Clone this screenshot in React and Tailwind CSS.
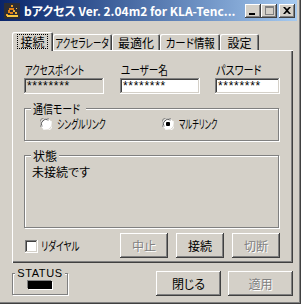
import React from 'react';

const jp = "font-['Noto_Sans_CJK_JP',sans-serif] [font-feature-settings:'palt']";
const raised =
  'bg-[#d4d0c8] shadow-[inset_-1px_-1px_#404040,inset_1px_1px_#ffffff,inset_-2px_-2px_#808080,inset_2px_2px_#d4d0c8]';
const sunken =
  'shadow-[inset_-1px_-1px_#ffffff,inset_1px_1px_#808080,inset_-2px_-2px_#d4d0c8,inset_2px_2px_#404040]';
const etched = 'border border-[#808080] shadow-[1px_1px_#ffffff,inset_1px_1px_#ffffff]';
const disabledText = 'text-[#808080] [text-shadow:1px_1px_#ffffff]';

// MS UI Gothic has narrow kana; squeeze the Noto glyphs to the same run width
function Narrow({ children, className = '' }) {
  return <span className={`inline-block whitespace-nowrap ${className}`}>{children}</span>;
}

function AppIcon() {
  return (
    <svg width="16" height="16" viewBox="0 0 16 16" className="shrink-0">
      <rect x="0" y="0" width="16" height="16" fill="#2e2e34" />
      <rect x="7" y="2" width="2" height="2" fill="#f0a020" />
      <rect x="5" y="5" width="5" height="2" fill="#e08018" />
      <rect x="4" y="7" width="2" height="3" fill="#e08018" />
      <rect x="9" y="7" width="2" height="2" fill="#f0b030" />
      <rect x="6" y="9" width="3" height="2" fill="#e08018" />
      <rect x="11" y="9" width="2" height="2" fill="#f0b030" />
      <rect x="2" y="11" width="2" height="2" fill="#f0a020" />
      <rect x="3" y="12" width="11" height="2" fill="#f8c840" />
      <rect x="12" y="5" width="1" height="1" fill="#f8c840" />
    </svg>
  );
}

function CaptionButton({ children, className = '' }) {
  return (
    <div className={`${raised} w-[16px] h-[14px] flex items-center justify-center ${className}`}>
      {children}
    </div>
  );
}

function TitleBar() {
  return (
    <div className="h-[21px] w-[297px] flex items-center bg-linear-to-r from-[#0a246a] to-[#a6caf0]">
      <div className="ml-[4px]">
        <AppIcon />
      </div>
      <div className={`ml-[4px] text-white font-bold text-[12px] leading-[14px] whitespace-nowrap ${jp}`}>
        bアクセス Ver. 2.04m2 for KLA-Tenc...
      </div>
      <div className="ml-auto mr-[2px] flex items-center">
        <CaptionButton>
          <svg width="8" height="8" viewBox="0 0 8 8">
            <rect x="0" y="6" width="6" height="2" fill="#000" />
          </svg>
        </CaptionButton>
        <CaptionButton>
          <svg width="9" height="9" viewBox="0 0 9 9">
            <rect x="0.5" y="0.5" width="8" height="8" fill="none" stroke="#808080" />
            <rect x="0" y="1" width="9" height="1" fill="#808080" />
          </svg>
        </CaptionButton>
        <CaptionButton className="ml-[2px]">
          <svg width="8" height="7" viewBox="0 0 8 7">
            <path d="M0 0h2l2 2 2-2h2L5 3.5 8 7H6L4 5 2 7H0l3-3.5z" fill="#000" />
          </svg>
        </CaptionButton>
      </div>
    </div>
  );
}

const tabBevel =
  'bg-[#d4d0c8] rounded-tl-[2px] rounded-tr-[2px] shadow-[inset_1px_1px_#ffffff,inset_-1px_0_#404040,inset_-2px_0_#808080]';

function Tabs() {
  return (
    <div className={`flex items-end h-[18px] ${jp}`}>
      <div className={`w-[41px] h-[19px] -mb-px relative z-10 ${tabBevel} flex items-start justify-center pt-[3px]`}>
        <span className="outline-1 outline-dotted outline-black px-[2px] leading-[13px]">接続</span>
      </div>
      <div className={`w-[59px] h-[16px] ${tabBevel} flex items-start justify-center pt-[2px] leading-[13px]`}>
        <Narrow className="scale-x-[0.7]">アクセラレータ</Narrow>
      </div>
      <div className={`w-[48px] h-[16px] ${tabBevel} flex items-start justify-center pt-[2px] leading-[13px]`}>
        最適化
      </div>
      <div className={`w-[60px] h-[16px] ${tabBevel} flex items-start justify-center pt-[2px] leading-[13px]`}>
        <Narrow className="scale-x-[0.87]">カード情報</Narrow>
      </div>
      <div className={`w-[39px] h-[16px] ${tabBevel} flex items-start justify-center pt-[2px] leading-[13px]`}>
        設定
      </div>
    </div>
  );
}

function Field({ w, label, readOnly }) {
  return (
    <div className={`flex flex-col ${w}`}>
      <div className={`h-[14px] leading-[12px] pl-px whitespace-nowrap ${jp}`}>{label}</div>
      <div
        className={`${w} h-[16px] ${sunken} ${readOnly ? 'bg-[#d4d0c8]' : 'bg-white'} pl-[3px] flex items-center text-[12px] leading-[12px] tracking-[0.7px] font-['Liberation_Sans',sans-serif]`}
      >
        ********
      </div>
    </div>
  );
}

function Radio({ checked, children }) {
  return (
    <div className="flex items-center">
      <svg width="12" height="12" viewBox="0 0 12 12" className="shrink-0">
        <circle cx="6" cy="6" r="5.5" fill="#ffffff" />
        <path d="M1.2 9A5.5 5.5 0 0 1 9 1.2" stroke="#808080" strokeWidth="1" fill="none" />
        <path d="M2.3 8.3A4.3 4.3 0 0 1 8.3 2.3" stroke="#404040" strokeWidth="1" fill="none" />
        <path d="M10.8 3A5.5 5.5 0 0 1 3 10.8" stroke="#ffffff" strokeWidth="1" fill="none" />
        <circle cx="6" cy="6" r="3.8" fill="#ffffff" />
        {checked && <rect x="4" y="4" width="4" height="4" rx="1" fill="#000" />}
      </svg>
      <span className={`ml-[5px] leading-[12px] ${jp}`}>{children}</span>
    </div>
  );
}

function Button({ children, w, disabled, className = '' }) {
  return (
    <div
      className={`${raised} ${w} h-[25px] flex items-center justify-center ${jp} ${disabled ? disabledText : 'text-black'} ${className}`}
    >
      {children}
    </div>
  );
}

function Panel() {
  return (
    <div className="w-[281px] h-[213px] shadow-[inset_1px_1px_#ffffff,inset_-1px_-1px_#404040,inset_-2px_-2px_#808080] pl-[12px] pr-[13px] pt-[14px] flex flex-col">
      <div className="flex">
        <Field
          w="w-[80px]"
          readOnly
          label={<Narrow className="origin-left scale-x-[0.69]">アクセスポイント</Narrow>}
        />
        <div className="ml-[16px]">
          <Field w="w-[80px]" label={<Narrow className="origin-left scale-x-[0.8]">ユーザー名</Narrow>} />
        </div>
        <div className="ml-[15px]">
          <Field w="w-[65px]" label={<Narrow className="origin-left scale-x-[0.84]">パスワード</Narrow>} />
        </div>
      </div>

      <div className={`mt-[14px] h-[33px] w-[255px] ${etched} flex flex-col`}>
        <div className={`-mt-[7px] ml-[6px] self-start px-[2px] bg-[#d4d0c8] leading-[13px] w-[55px] ${jp}`}>
          <Narrow className="origin-left scale-x-[0.83]">通信モード</Narrow>
        </div>
        <div className="flex mt-[3px] pl-[15px]">
          <div className="w-[122px]">
            <Radio>
              <Narrow className="origin-left scale-x-[0.65]">シングルリンク</Narrow>
            </Radio>
          </div>
          <Radio checked>
            <Narrow className="origin-left scale-x-[0.6]">マルチリンク</Narrow>
          </Radio>
        </div>
      </div>

      <div className={`mt-[14px] h-[73px] w-[255px] ${etched} flex flex-col`}>
        <div className={`-mt-[7px] ml-[6px] self-start px-[2px] bg-[#d4d0c8] leading-[13px] ${jp}`}>状態</div>
        <div className={`ml-[7px] mt-[4px] leading-[12px] ${jp}`}>未接続です</div>
      </div>

      <div className="flex items-center mt-[5px] w-[256px]">
        <div className="flex items-center ml-px mt-[1px]">
          <div className={`w-[13px] h-[13px] bg-white ${sunken}`} />
          <span className={`ml-[3px] leading-[12px] ${jp}`}>
            <Narrow className="origin-left scale-x-[0.72]">リダイヤル</Narrow>
          </span>
        </div>
        <div className="ml-auto flex gap-[8px]">
          <Button w="w-[48px]" disabled>中止</Button>
          <Button w="w-[48px]">接続</Button>
          <Button w="w-[48px]" disabled>切断</Button>
        </div>
      </div>
    </div>
  );
}

function Footer() {
  return (
    <div className="flex items-start w-[281px]">
      <div className={`mt-[10px] w-[56px] h-[22px] ${etched} flex flex-col items-center`}>
        <div className="-mt-[7px] px-[2px] bg-[#d4d0c8] text-[11px] leading-[12px] tracking-[0.6px] font-['Liberation_Sans',sans-serif]">
          STATUS
        </div>
        <div className="mt-[2px] w-[24px] h-[8px] bg-black shadow-[-1px_-1px_#808080,1px_1px_#ffffff]" />
      </div>
      <div className="ml-auto mt-[8px] flex gap-[7px]">
        <Button w="w-[65px]">閉じる</Button>
        <Button w="w-[65px]" disabled>適用</Button>
      </div>
    </div>
  );
}

export default function App() {
  return (
    <div className="w-[301px] h-[304px] bg-[#d4d0c8] flex flex-col shadow-[inset_-1px_-1px_#404040,inset_-2px_-2px_#808080] overflow-hidden text-[12px] text-black">
      <TitleBar />
      <div className="pl-[12px] pt-[11px]">
        <Tabs />
        <Panel />
        <Footer />
      </div>
    </div>
  );
}
